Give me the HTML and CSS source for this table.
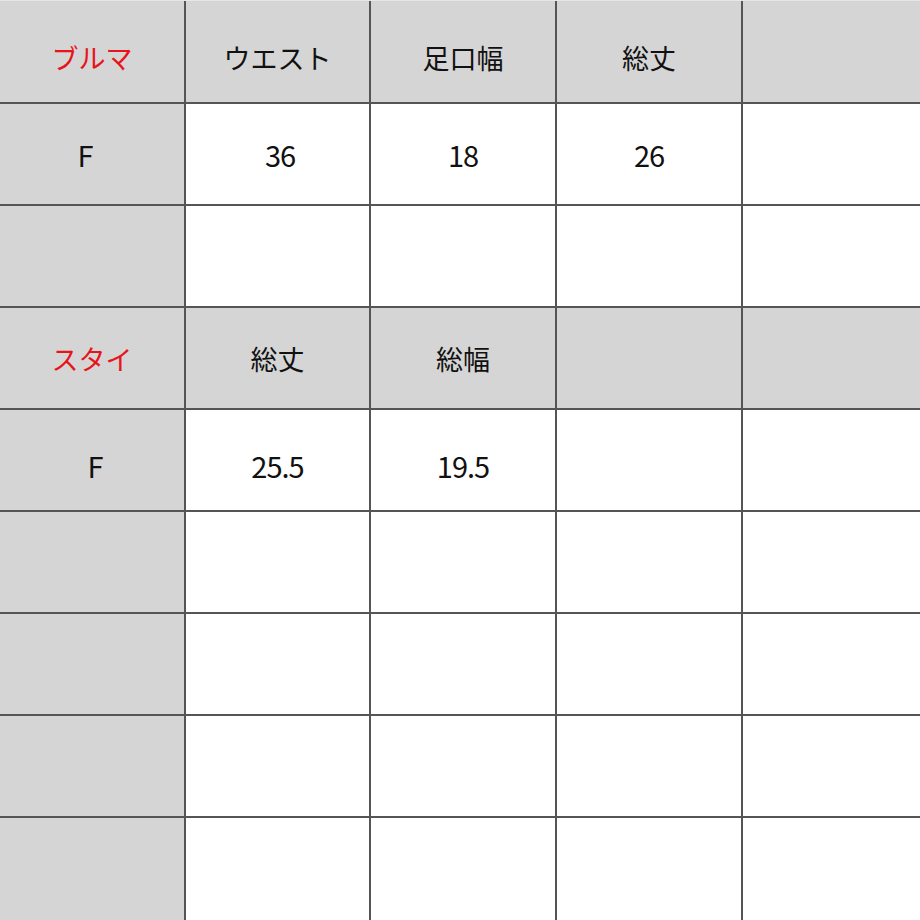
FILE: index.html
```html
<!DOCTYPE html>
<html lang="ja">
<head>
<meta charset="utf-8">
<title>サイズ表</title>
<link rel="stylesheet" href="styles.css">
</head>
<body>
<div class="sheet">
  <div class="cell head low"><span class="red">ブルマ</span></div>
  <div class="cell head low">ウエスト</div>
  <div class="cell head low">足口幅</div>
  <div class="cell head low">総丈</div>
  <div class="cell head low"></div>

  <div class="cell side num"><span class="f-left">F</span></div>
  <div class="cell num"><span class="nudge">36</span></div>
  <div class="cell num">18</div>
  <div class="cell num">26</div>
  <div class="cell"></div>

  <div class="cell side"></div>
  <div class="cell"></div>
  <div class="cell"></div>
  <div class="cell"></div>
  <div class="cell"></div>

  <div class="cell head"><span class="red">スタイ</span></div>
  <div class="cell head">総丈</div>
  <div class="cell head">総幅</div>
  <div class="cell head"></div>
  <div class="cell head"></div>

  <div class="cell side low num"><span class="f-right">F</span></div>
  <div class="cell low num">25.5</div>
  <div class="cell low num">19.5</div>
  <div class="cell"></div>
  <div class="cell"></div>

  <div class="cell side"></div>
  <div class="cell"></div>
  <div class="cell"></div>
  <div class="cell"></div>
  <div class="cell"></div>

  <div class="cell side"></div>
  <div class="cell"></div>
  <div class="cell"></div>
  <div class="cell"></div>
  <div class="cell"></div>

  <div class="cell side"></div>
  <div class="cell"></div>
  <div class="cell"></div>
  <div class="cell"></div>
  <div class="cell"></div>

  <div class="cell side"></div>
  <div class="cell"></div>
  <div class="cell"></div>
  <div class="cell"></div>
  <div class="cell"></div>
</div>
</body>
</html>
```

FILE: styles.css
```css
html, body {
  margin: 0;
  padding: 0;
  background: #ffffff;
}

.sheet {
  width: 920px;
  height: 920px;
  overflow: hidden;
  display: grid;
  grid-template-columns: 184px 183px 184px 184px 1fr;
  grid-template-rows: 101px repeat(7, 100px) 1fr;
  gap: 2px;
  background: #555555;
  border-top: 1px solid #e6e6e6;
  box-sizing: border-box;
  font-family: "Noto Sans CJK JP", "Noto Sans", sans-serif;
  font-size: 27px;
  color: #111111;
}

.cell {
  background: #ffffff;
  display: flex;
  align-items: center;
  justify-content: center;
  line-height: 1;
}

.head,
.side {
  background: #d5d5d5;
}

.low {
  padding-top: 11px;
}

.num {
  font-size: 29px;
  letter-spacing: -1px;
}

.red {
  color: #e8141c;
}

.nudge {
  margin-left: 5px;
}

.f-left {
  margin-right: 14px;
}

.f-right {
  margin-left: 6px;
}
```
